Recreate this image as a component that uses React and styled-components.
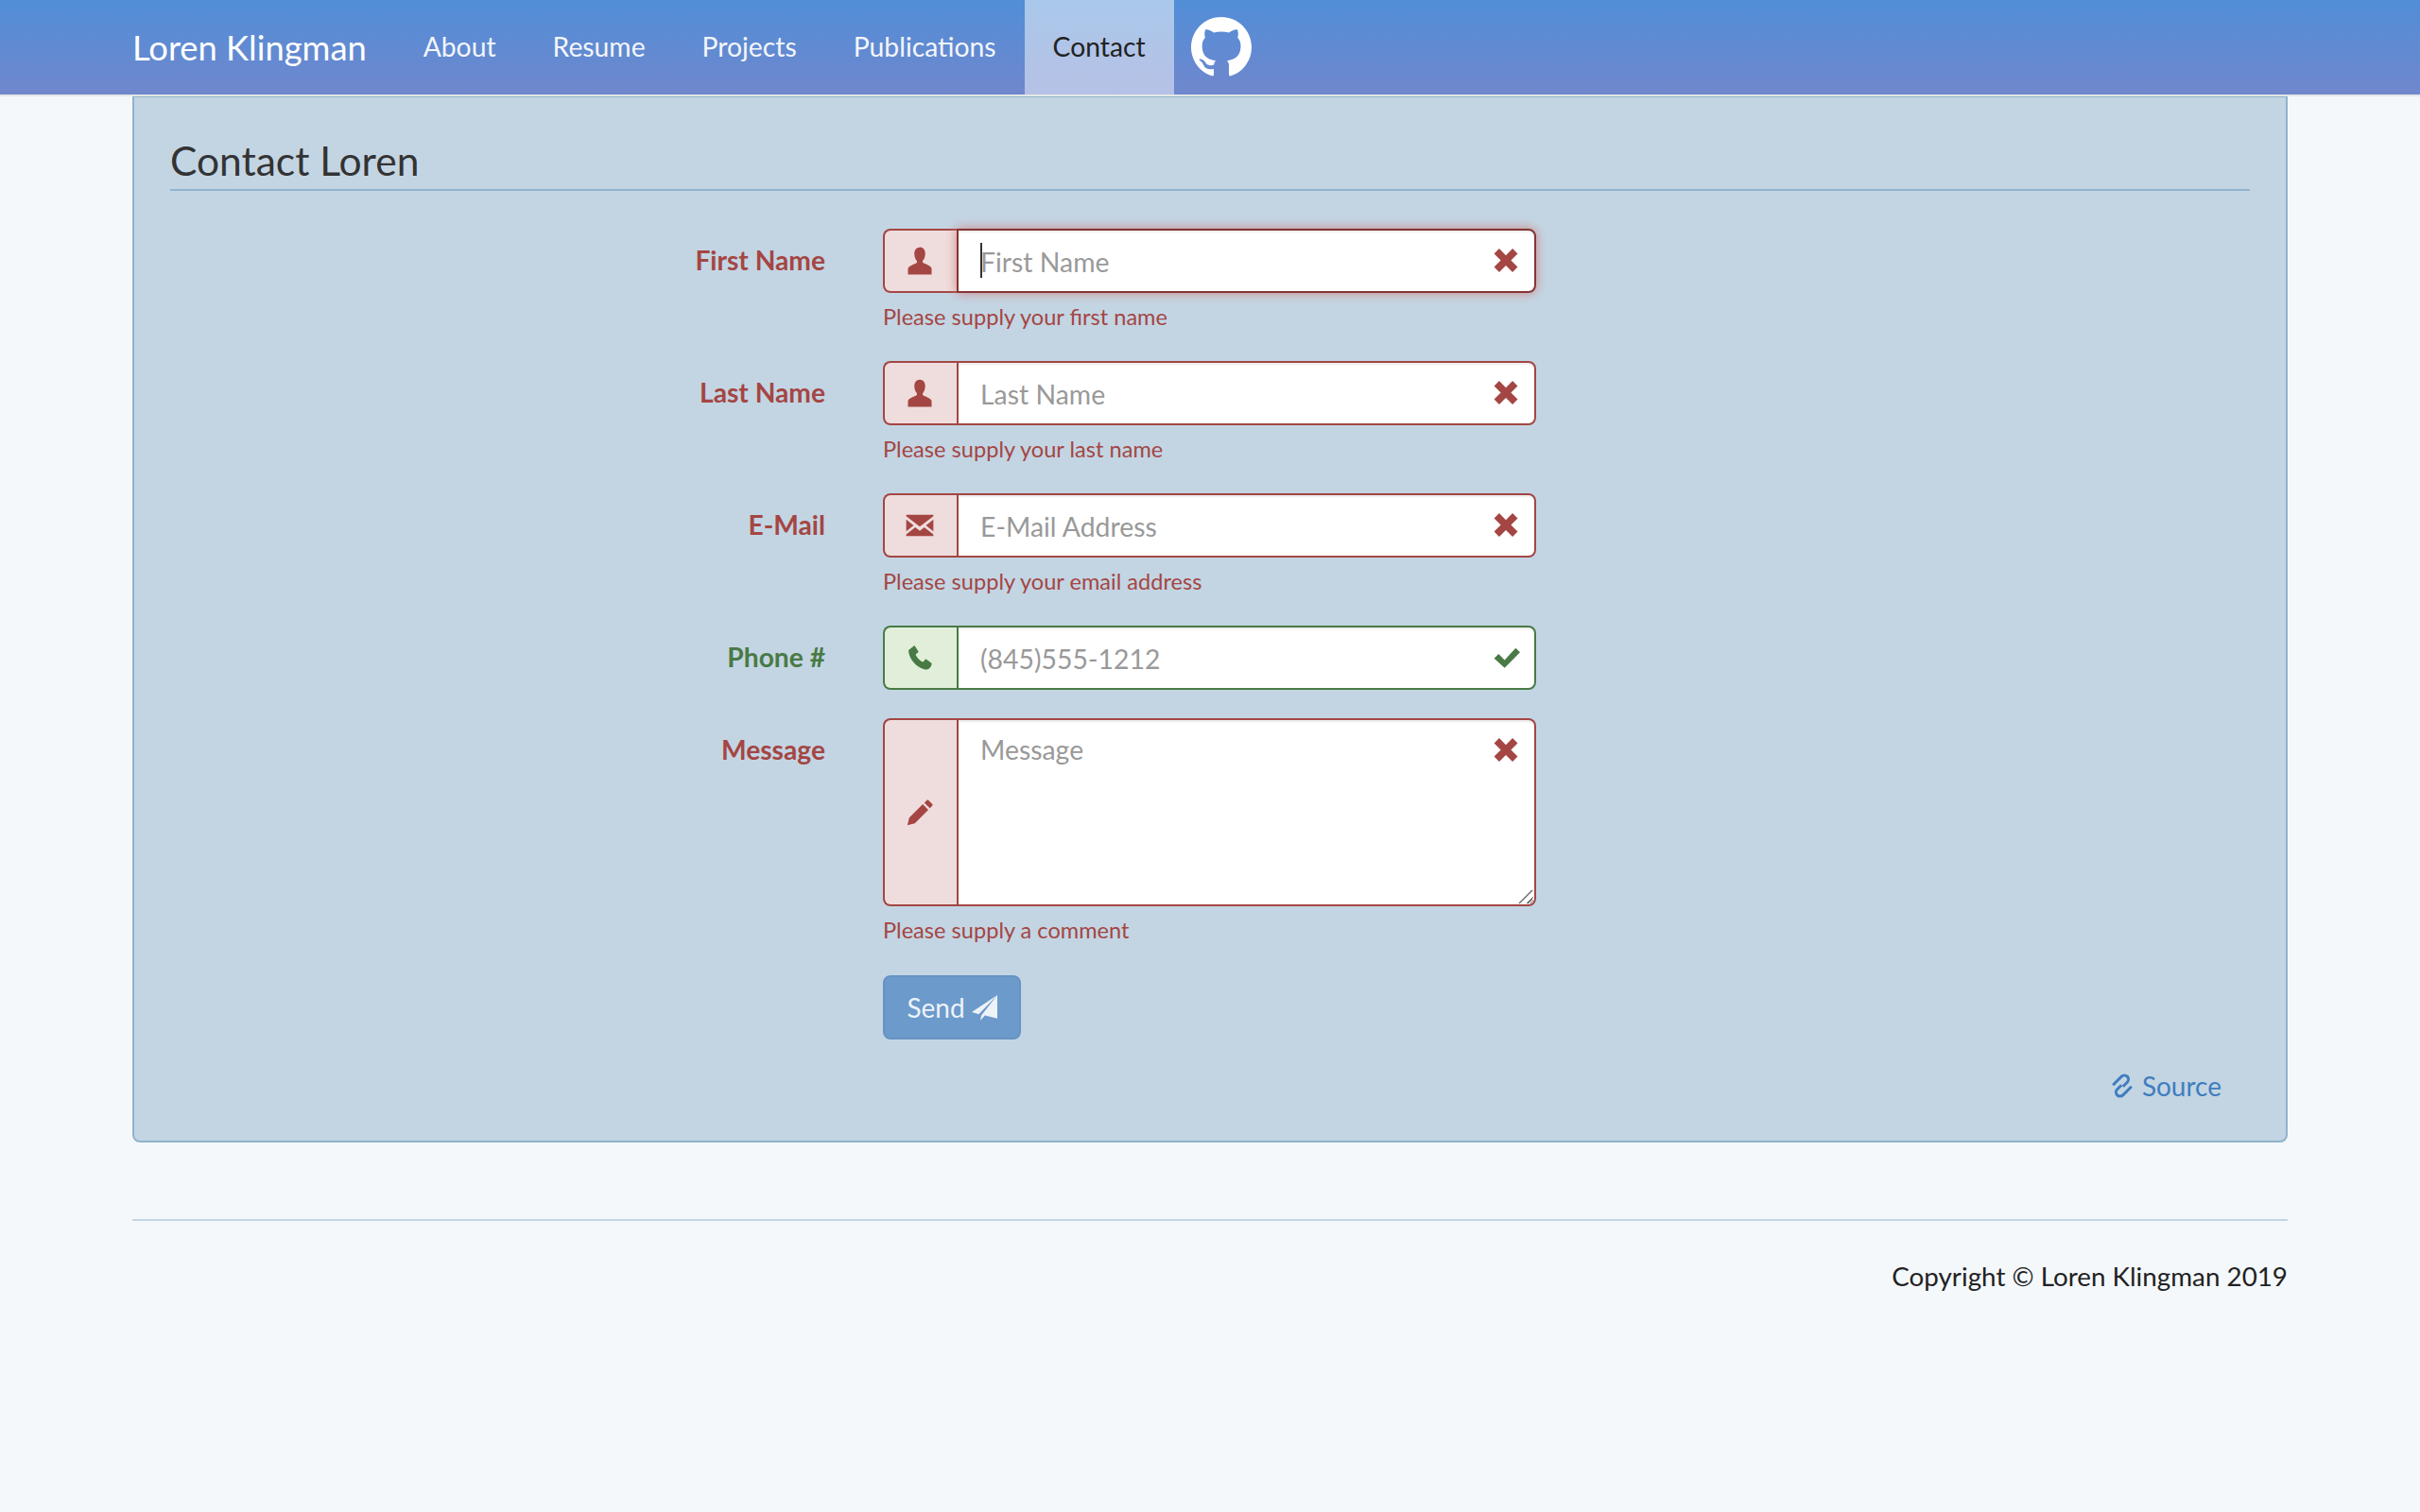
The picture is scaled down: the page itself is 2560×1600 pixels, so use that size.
import React from "react";
import styled, { createGlobalStyle } from "styled-components";

const Global = createGlobalStyle`
  html, body { margin: 0; padding: 0; background: #f4f8fb; }
  body { font-family: Lato, "Liberation Sans", sans-serif; color: #222; font-size: 28px; line-height: 40px; min-height: 1600px; }
  * { box-sizing: border-box; }
`;

const Nav = styled.nav`
  height: 102px;
  border-bottom: 2px solid #e4e7e8;
  background: linear-gradient(#518ed7, #7087cd);
  padding: 0 140px;
  display: flex;
  align-items: stretch;
`;
const Brand = styled.a`
  font-size: 36.3px;
  color: #fff;
  display: flex;
  align-items: center;
  margin-right: 30px;
`;
const NavItem = styled.a`
  font-size: 28.3px;
  padding: 0 30px;
  display: flex;
  align-items: center;
  padding-bottom: 2px;
  color: ${p => (p.$active ? "#222" : "#f3f6fb")};
  background: ${p => (p.$active ? "linear-gradient(#a9c8ea, #b6c1e6)" : "transparent")};
`;
const GitHub = styled.svg`
  width: 64px;
  height: 64px;
  margin: 18px 0 0 18px;
  fill: #fff;
`;

const Main = styled.main`
  padding: 0 140px;
`;
const Panel = styled.section`
  height: 1107px;
  background: #c3d5e3;
  border: 2px solid #8fb4cb;
  border-top-width: 1px;
  border-radius: 0 0 8px 8px;
  padding: 38px 38px 0;
`;
const Title = styled.h2`
  margin: 0 0 40px;
  font-size: 42.5px;
  font-weight: 400;
  line-height: 58px;
  height: 61px;
  color: #333;
  border-bottom: 2px solid #8fb4cb;
`;
const Form = styled.form`
  display: grid;
  grid-template-columns: 693px 691px;
  column-gap: 61px;
  align-items: start;
`;
const Label = styled.label`
  grid-column: 1;
  text-align: right;
  font-size: 28.2px;
  font-weight: 700;
  line-height: 40px;
  padding-top: 13px;
  color: ${p => (p.$ok ? "#497a45" : "#a44643")};
`;
const Field = styled.div`
  grid-column: 2;
  margin-bottom: ${p => (p.$mb ? p.$mb : 0)}px;
`;
const Group = styled.div`
  position: relative;
  display: flex;
  height: ${p => p.$h || 68}px;
`;
const Addon = styled.span`
  width: 78px;
  flex: none;
  display: flex;
  align-items: center;
  justify-content: center;
  padding-right: 2px;
  background: ${p => (p.$ok ? "#e0eeda" : "#efdddd")};
  border: 2px solid ${p => (p.$ok ? "#497a45" : "#a44643")};
  border-right: 0;
  border-radius: 8px 0 0 8px;
  color: ${p => (p.$ok ? "#497a45" : "#a44643")};
`;
const inputStyle = `
  flex: 1;
  min-width: 0;
  display: block;
  font-family: Lato, "Liberation Sans", sans-serif;
  font-size: 28.4px;
  color: #555;
  background: #fff;
  border-radius: 0 8px 8px 0;
  padding: 2px 22px 0 23px;
  outline: none;
  &::placeholder { color: #999; opacity: 1; }
`;
const Input = styled.input`
  ${inputStyle}
  border: 2px solid ${p => (p.$focus ? "#843534" : p.$ok ? "#497a45" : "#a44643")};
  box-shadow: ${p => (p.$focus ? "inset 0 2px 2px rgba(0,0,0,.075), 0 0 12px #ce8483" : "inset 0 2px 2px rgba(0,0,0,.075)")};
`;
const Area = styled.textarea`
  ${inputStyle}
  border: 2px solid #a44643;
  box-shadow: inset 0 2px 2px rgba(0,0,0,.075);
  padding-top: 11px;
  line-height: 40px;
  resize: vertical;
`;
const Caret = styled.span`
  position: absolute;
  left: 103px;
  top: 15px;
  width: 2px;
  height: 37px;
  background: #333;
`;
const Feedback = styled.svg`
  position: absolute;
  right: ${p => (p.$ok ? 17 : 19)}px;
  top: ${p => (p.$ok ? 19 : 20)}px;
  width: ${p => (p.$ok ? 28 : 26)}px;
  height: ${p => (p.$ok ? 28 : 26)}px;
  fill: ${p => (p.$ok ? "#497a45" : "#a44643")};
`;
const Grip = styled.svg`
  position: absolute;
  right: 3px;
  bottom: 2px;
  width: 16px;
  height: 16px;
  stroke: #666;
  stroke-width: 1.4;
  pointer-events: none;
`;
const Help = styled.p`
  margin: 5px 0 0;
  height: 40px;
  font-size: 23.6px;
  line-height: 40px;
  color: #a44643;
`;
const SendButton = styled.button`
  width: 146px;
  height: 68px;
  background: #6c9acb;
  border: 2px solid #6792c3;
  border-radius: 8px;
  color: #edf3f8;
  font-family: Lato, "Liberation Sans", sans-serif;
  font-size: 28px;
  display: flex;
  align-items: center;
  justify-content: center;
  gap: 7px;
  padding: 0;
`;
const SourceRow = styled.div`
  display: flex;
  justify-content: flex-end;
  margin-top: 29px;
  padding-right: 30px;
`;
const SourceLink = styled.a`
  display: flex;
  align-items: center;
  gap: 6px;
  font-size: 28px;
  line-height: 40px;
  color: #3f7dbf;
`;
const Rule = styled.hr`
  margin: 81px 0 0;
  border: 0;
  border-top: 2px solid #c3d5e3;
`;
const Copy = styled.p`
  margin: 39px 0 0;
  text-align: right;
  font-size: 27.8px;
  line-height: 40px;
  color: #222;
`;

const I = ({ d, size = 30, fill = "currentColor" }) => (
  <svg width={size} height={size} viewBox="0 0 24 24" fill={fill}><path d={d} /></svg>
);
const USER = "M12 0.5c-3 0-4.6 2.5-4.6 5.5 0 2.4.9 4.6 2 5.9.4.5.3 1.3-.2 1.8-1.300 1-6.200 2.300-7.200 4.600V23.500h20v-5.200c-1-2.300-5.900-3.600-7.200-4.600-.5-.5-.6-1.300-.2-1.800 1.100-1.300 2-3.500 2-5.900 0-3-1.600-5.500-4.600-5.500z";
const MAIL = "M0.500 3h23v1.200L12 13 0.500 4.200zM0.500 7v10l6.300-5zM23.500 7v10l-6.300-5zM0.500 21v-1.500l7.700-6 3.800 3 3.800-3 7.700 6V21z";
const PHONE = "M2.500 5.500 7.500 1.500l3.500 5.500-2.500 2.200c.8 2.500 3.500 5.500 6.300 6.400l2.200-2.600 5 3.600c.2 2.500-1.800 5.200-4 5.400C10.500 21.500 2.500 13.500 2.500 5.500z";
const PENCIL = "M1.500 22.500l1.600-6.300L14.500 4.800l4.700 4.700L7.800 20.900zM15.800 3.500l2-2c.5-.5 1.200-.5 1.700 0l3 3c.5.5.5 1.200 0 1.700l-2 2z";
const X = "M5.500 1 12 7.500 18.500 1 23.500 6 17 12.500 23.500 19 18.500 24 12 17.500 5.500 24 .5 19 7 12.500 .5 6z";
const OK = "M0.500 13.500 4.500 9.500l5.500 5.500L20 4l4 4L10 22z";
const GH = "M8 0C3.580 0 0 3.580 0 8c0 3.540 2.290 6.530 5.470 7.590.4.070.55-.17.55-.38 0-.19-.01-.82-.01-1.490-2.010.37-2.530-.49-2.690-.94-.09-.23-.48-.94-.82-1.130-.28-.15-.68-.52-.01-.53.63-.01 1.080.58 1.230.82.72 1.210 1.870.87 2.330.66.07-.52.28-.87.51-1.070-1.780-.2-3.640-.89-3.640-3.950 0-.87.31-1.590.82-2.150-.08-.2-.36-1.020.08-2.120 0 0 .67-.21 2.200.82.64-.18 1.320-.27 2-.27.68 0 1.360.09 2 .27 1.530-1.040 2.200-.82 2.200-.82.44 1.100.16 1.920.08 2.120.51.56.82 1.270.82 2.150 0 3.070-1.870 3.750-3.650 3.950.29.25.54.73.54 1.480 0 1.070-.01 1.930-.01 2.200 0 .21.15.46.55.38A8.013 8.013 0 0016 8c0-4.420-3.580-8-8-8z";

const Row = ({ label, icon, placeholder, ok, focus, help, mb }) => (
  <>
    <Label $ok={ok}>{label}</Label>
    <Field $mb={mb}>
      <Group>
        <Addon $ok={ok}><I d={icon} /></Addon>
        <Input placeholder={placeholder} $ok={ok} $focus={focus} readOnly />
        {focus && <Caret />}
        <Feedback viewBox="0 0 24 24" $ok={ok}><path d={ok ? OK : X} /></Feedback>
      </Group>
      {help && <Help>{help}</Help>}
    </Field>
  </>
);

export default function App() {
  return (
    <>
      <Global />
      <Nav>
        <Brand>Loren Klingman</Brand>
        <NavItem>About</NavItem>
        <NavItem>Resume</NavItem>
        <NavItem>Projects</NavItem>
        <NavItem>Publications</NavItem>
        <NavItem $active>Contact</NavItem>
        <GitHub viewBox="0 0 16 16"><path d={GH} /></GitHub>
      </Nav>
      <Main>
        <Panel>
          <Title>Contact Loren</Title>
          <Form>
            <Row label="First Name" icon={USER} placeholder="First Name" focus help="Please supply your first name" mb={27} />
            <Row label="Last Name" icon={USER} placeholder="Last Name" help="Please supply your last name" mb={27} />
            <Row label="E-Mail" icon={MAIL} placeholder="E-Mail Address" help="Please supply your email address" mb={27} />
            <Row label="Phone #" icon={PHONE} placeholder="(845)555-1212" ok mb={30} />
            <Label>Message</Label>
            <Field $mb={28}>
              <Group $h={199}>
                <Addon><I d={PENCIL} /></Addon>
                <Area placeholder="Message" readOnly />
                <Feedback viewBox="0 0 24 24"><path d={X} /></Feedback>
                <Grip viewBox="0 0 16 16">
                  <path d="M1 15 15 1M10 15l5-5" />
                </Grip>
              </Group>
              <Help>Please supply a comment</Help>
            </Field>
            <Field>
              <SendButton type="button">
                Send
                <svg width="27" height="27" viewBox="0 0 24 24">
                  <path fill="#edf3f8" d="M24 0 0 16l6.500 2zM24 0 9 19l-1 5 4.300-5L24 22z" />
                </svg>
              </SendButton>
            </Field>
          </Form>
          <SourceRow>
            <SourceLink>
              <svg width="30" height="30" viewBox="-2 -2 28 28" fill="none" stroke="currentColor" strokeWidth="2.8">
                <g transform="rotate(-45 12 12)">
                  <path d="M6 5H18a4 4 0 0 1 0 8H12" />
                  <path d="M18 19H6a4 4 0 0 1 0-8H12" />
                </g>
              </svg>
              Source
            </SourceLink>
          </SourceRow>
        </Panel>
        <Rule />
        <Copy>Copyright © Loren Klingman 2019</Copy>
      </Main>
    </>
  );
}
